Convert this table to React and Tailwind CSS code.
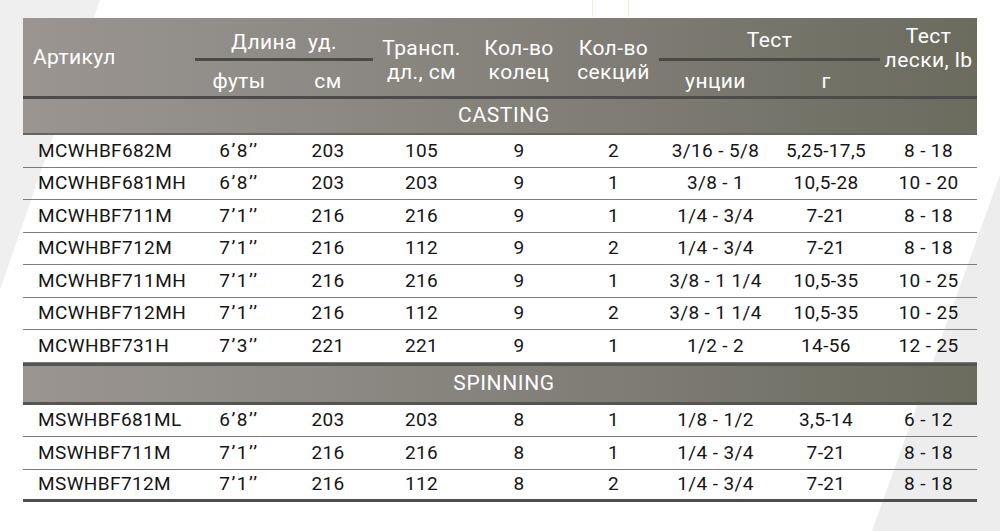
const COLS = "grid-cols-[172px_88px_90px_97px_98px_91px_113px_108px_97px]";

const CASTING = [
  ["MCWHBF682M", "6’8’’", "203", "105", "9", "2", "3/16 - 5/8", "5,25-17,5", "8 - 18"],
  ["MCWHBF681MH", "6’8’’", "203", "203", "9", "1", "3/8 - 1", "10,5-28", "10 - 20"],
  ["MCWHBF711M", "7’1’’", "216", "216", "9", "1", "1/4 - 3/4", "7-21", "8 - 18"],
  ["MCWHBF712M", "7’1’’", "216", "112", "9", "2", "1/4 - 3/4", "7-21", "8 - 18"],
  ["MCWHBF711MH", "7’1’’", "216", "216", "9", "1", "3/8 - 1 1/4", "10,5-35", "10 - 25"],
  ["MCWHBF712MH", "7’1’’", "216", "112", "9", "2", "3/8 - 1 1/4", "10,5-35", "10 - 25"],
  ["MCWHBF731H", "7’3’’", "221", "221", "9", "1", "1/2 - 2", "14-56", "12 - 25"],
];

const SPINNING = [
  ["MSWHBF681ML", "6’8’’", "203", "203", "8", "1", "1/8 - 1/2", "3,5-14", "6 - 12"],
  ["MSWHBF711M", "7’1’’", "216", "216", "8", "1", "1/4 - 3/4", "7-21", "8 - 18"],
  ["MSWHBF712M", "7’1’’", "216", "112", "8", "2", "1/4 - 3/4", "7-21", "8 - 18"],
];

function Row({ cells, last }) {
  return (
    <div className={`grid ${COLS} h-[32.5px] items-center text-[19px] tracking-[0.02em] text-[#151515] ${last ? "border-b-[3px] border-[#4e4e4e]" : "border-b border-[#7c7c7c]"}`}>
      {cells.map((c, i) => (
        <div key={i} className={i === 0 ? "pl-[15px]" : i === 1 ? "text-center tracking-[0.08em]" : "text-center"}>
          {c}
        </div>
      ))}
    </div>
  );
}

function Section({ title, className }) {
  return (
    <div className={`flex items-center justify-center pl-2 text-[21px] tracking-[0.03em] text-white bg-gradient-to-r from-[#9a9591] via-[#85827c] to-[#6b6b5e] ${className}`}>
      {title}
    </div>
  );
}

export default function App() {
  return (
    <div className="relative w-[1000px] h-[531px] bg-white overflow-hidden font-['Roboto','Liberation_Sans',sans-serif]">
      <svg className="absolute inset-0" width="1000" height="531">
        <polygon points="0,0 100,0 0,290" fill="#efefef" />
        <polygon points="1000,175 872,531 1000,531" fill="#ededee" />
        <rect x="592" y="0" width="1" height="17" fill="#f2ecd0" />
        <rect x="628" y="0" width="1" height="17" fill="#f2ecd0" />
      </svg>

      <div className="relative pt-[18px] pl-[23px] w-[977px]">
        {/* header */}
        <div className={`grid ${COLS} grid-rows-[43px_35px] text-white text-[21px] tracking-[0.02em] leading-[24px] bg-gradient-to-r from-[#9a9591] via-[#85827c] to-[#6b6b5e] border-b-[3px] border-[#4b4b4b]`}>
          <div className="row-span-2 flex items-center pl-[10px]">Артикул</div>
          <div className="col-span-2 flex items-center justify-center pt-2 border-b-[3px] border-[#4a4a46]">Длина&nbsp;&nbsp;уд.</div>
          <div className="row-span-2 flex flex-col items-center justify-center pt-[6px]">
            <span>Трансп.</span>
            <span>дл., см</span>
          </div>
          <div className="row-span-2 flex flex-col items-center justify-center pt-[6px]">
            <span>Кол-во</span>
            <span>колец</span>
          </div>
          <div className="row-span-2 flex flex-col items-center justify-center pt-[6px]">
            <span>Кол-во</span>
            <span>секций</span>
          </div>
          <div className="col-span-2 flex items-center justify-center pt-1 border-b-[3px] border-[#4a4a46]">Тест</div>
          <div className="row-span-2 flex flex-col items-center justify-center pb-[18px]">
            <span>Тест</span>
            <span>лески, lb</span>
          </div>
          <div className="flex items-center justify-center pt-1">футы</div>
          <div className="flex items-center justify-center pt-1">см</div>
          <div className="flex items-center justify-center pt-1">унции</div>
          <div className="flex items-center justify-center pt-1">г</div>
        </div>

        <Section title="CASTING" className="h-[36px] border-b-2 border-[#66655e]" />
        {CASTING.map((r) => (
          <Row key={r[0]} cells={r} last={false} />
        ))}

        <Section title="SPINNING" className="h-[42px] border-y-[3px] border-[#545450]" />
        {SPINNING.map((r, i) => (
          <Row key={r[0]} cells={r} last={i === SPINNING.length - 1} />
        ))}
      </div>
    </div>
  );
}
